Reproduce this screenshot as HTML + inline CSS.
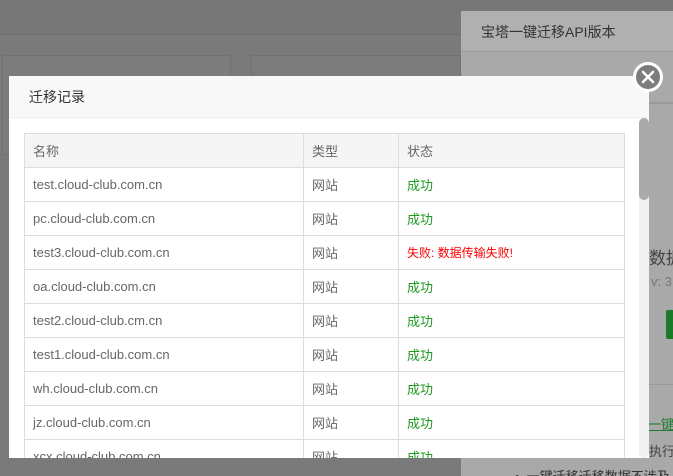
<!DOCTYPE html>
<html><head><meta charset="utf-8"><style>
*{margin:0;padding:0;box-sizing:border-box}
html,body{width:673px;height:476px;overflow:hidden}
body{background:#7a7a7a;position:relative;font-family:"Liberation Sans","Noto Sans CJK SC",sans-serif}
.abs{position:absolute;white-space:nowrap}
td{border:1px solid #ddd;height:34px;padding:0 8px;font-size:13px;color:#666;white-space:nowrap;overflow:hidden}
th{border:1px solid #ddd;height:34px;padding:0 8px;font-size:13px;color:#666;font-weight:normal;text-align:left;background:#f5f5f5}
.g{color:#1e9a1e}.r{color:#f00;font-size:12px}
</style></head><body>
<div class="abs" style="left:0;top:0;width:673px;height:34px;background:#777"></div>
<div class="abs" style="left:0;top:34px;width:673px;height:1px;background:#6e6e6e"></div>
<div class="abs" style="left:2px;top:55px;width:229px;height:100px;border:1px solid #717171;background:#7c7c7c"></div>
<div class="abs" style="left:251px;top:55px;width:210px;height:100px;border:1px solid #717171;background:#7c7c7c"></div>
<div class="abs" style="left:461px;top:11px;width:212px;height:465px;background:#a9a9a9;overflow:hidden">
 <div class="abs" style="left:0;top:0;width:212px;height:41px;background:#b0b0b0;border-bottom:1px solid #999"></div>
 <div class="abs" style="left:20px;top:11px;font-size:14px;color:#333">宝塔一键迁移API版本</div>
 <div class="abs" style="left:0;top:91px;width:212px;height:2px;background:#999"></div>
 <div class="abs" style="left:188px;top:233px;font-size:17px;color:#444">数据</div>
 <div class="abs" style="left:190px;top:263px;font-size:13px;color:#777">v: 3.</div>
 <div class="abs" style="left:205px;top:299px;width:10px;height:29px;background:#1d7a2c;border-radius:2px"></div>
 <div class="abs" style="left:179px;top:373px;width:33px;height:1px;background:#999"></div>
 <div class="abs" style="left:187px;top:403px;font-size:13px;color:#1d7a2c;text-decoration:underline">一键</div>
 <div class="abs" style="left:188px;top:430px;font-size:13px;color:#444">执行</div>
 <div class="abs" style="left:54px;top:455px;font-size:13px;color:#333">•&nbsp; 一键迁移迁移数据不涉及</div>
</div>

<div class="abs" style="left:9px;top:76px;width:640px;height:382px;background:#fff;overflow:hidden">
 <div style="height:42px;background:#f8f8f8;border-bottom:1px solid #eee;padding-left:20px;line-height:42px;font-size:14px;color:#333">迁移记录</div>
 <div class="abs" style="left:630px;top:42px;width:10px;height:340px;background:#f0f0f0;border-radius:5px"></div>
 <div class="abs" style="left:630px;top:42px;width:10px;height:82px;background:#aaa;border-radius:5px"></div>
 <table class="abs" style="left:15px;top:57px;width:600px;border-collapse:collapse;table-layout:fixed">
 <colgroup><col style="width:279px"><col style="width:95px"><col style="width:226px"></colgroup>
 <tr><th>名称</th><th>类型</th><th>状态</th></tr>
 <tr><td>test.cloud-club.com.cn</td><td>网站</td><td class="g">成功</td></tr>
 <tr><td>pc.cloud-club.com.cn</td><td>网站</td><td class="g">成功</td></tr>
 <tr><td>test3.cloud-club.com.cn</td><td>网站</td><td class="r">失败: 数据传输失败!</td></tr>
 <tr><td>oa.cloud-club.com.cn</td><td>网站</td><td class="g">成功</td></tr>
 <tr><td>test2.cloud-club.cm.cn</td><td>网站</td><td class="g">成功</td></tr>
 <tr><td>test1.cloud-club.com.cn</td><td>网站</td><td class="g">成功</td></tr>
 <tr><td>wh.cloud-club.com.cn</td><td>网站</td><td class="g">成功</td></tr>
 <tr><td>jz.cloud-club.com.cn</td><td>网站</td><td class="g">成功</td></tr>
 <tr><td>xcx.cloud-club.com.cn</td><td>网站</td><td class="g">成功</td></tr>
 </table>
</div>
<div class="abs" style="left:633px;top:62px;width:30px;height:30px;border-radius:50%;background:#7d7d7d;border:3px solid #fff"></div>
<svg class="abs" style="left:633px;top:62px" width="30" height="30"><path d="M10 10L20 20M20 10L10 20" stroke="#fff" stroke-width="2.6" stroke-linecap="round"/></svg>
</body></html>
